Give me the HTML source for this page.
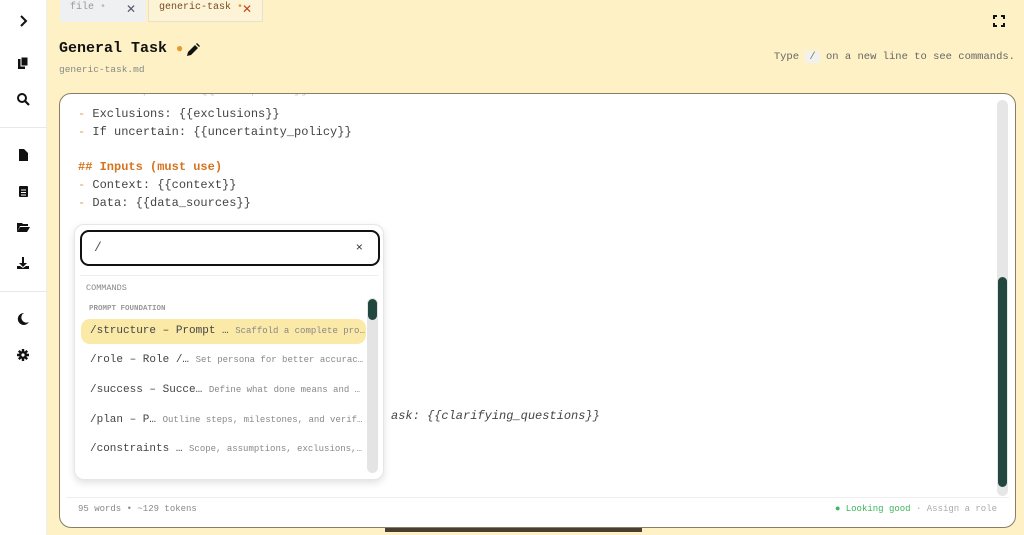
<!DOCTYPE html>
<html><head><style>
*{box-sizing:border-box;margin:0;padding:0}
body{width:1024px;height:535px;overflow:hidden;background:#fdf1c5;font-family:"Liberation Mono",monospace;position:relative}
.side{position:absolute;left:0;top:0;width:47px;height:535px;background:#fff;border-right:1px solid #eee}
.side .ic{position:absolute;left:16px;width:14px;height:14px}
.sep{position:absolute;left:0;width:47px;height:1px;background:#e8e8e8}
.tab{position:absolute;top:0;height:22px;font-size:10px;line-height:16px;padding:0 10px}
.ed{position:absolute;left:59px;top:93px;width:957px;height:435px;background:#fff;border:1px solid #8a7d66;border-radius:12px;overflow:hidden}
.code{position:absolute;left:18px;top:12px;font-size:12px;line-height:17.8px;color:#444;white-space:pre}
.d{color:#e09a5e}
.h{color:#d7731e;font-weight:bold}
.pop{position:absolute;left:74px;top:224px;width:310px;height:256px;background:#fff;border:1px solid #e6e6e6;border-radius:10px;box-shadow:0 3px 8px rgba(0,0,0,.12)}
.inp{position:absolute;left:5px;top:5px;width:300px;height:36px;border:2px solid #111;border-radius:9px;font-size:13px;color:#555;padding:8px 12px}
.item{position:absolute;left:6px;width:285px;height:25px;font-size:11px;line-height:25px;padding-left:9px;color:#444;white-space:nowrap;overflow:hidden;border-radius:9px}
.item span{font-size:9px;color:#888}
</style></head><body>
<div class="side">
<svg class="ic" style="top:14px" viewBox="0 0 14 14"><path d="M5 2l5 5-5 5" stroke="#111" stroke-width="2" fill="none"/></svg>
<svg class="ic" style="top:56px" viewBox="0 0 14 14"><rect x="2" y="3" width="7" height="10" fill="#111"/><rect x="5" y="1" width="7" height="9" fill="#111" stroke="#fff" stroke-width="1"/></svg>
<svg class="ic" style="top:92px" viewBox="0 0 14 14"><circle cx="6" cy="6" r="4" stroke="#111" stroke-width="2" fill="none"/><path d="M9 9l4 4" stroke="#111" stroke-width="2.2"/></svg>
<div class="sep" style="top:127px"></div>
<svg class="ic" style="top:148px" viewBox="0 0 14 14"><path d="M3 1h5l4 4v8H3z" fill="#111"/></svg>
<svg class="ic" style="top:184px" viewBox="0 0 14 14"><rect x="3" y="2" width="9" height="11" rx="1" fill="#111"/><path d="M5 6h5M5 8.5h5M5 11h5" stroke="#fff"/></svg>
<svg class="ic" style="top:220px" viewBox="0 0 14 14"><path d="M1 3h5l1 1h5v2H4l-3 6z" fill="#111"/><path d="M4 7h10l-3 5H1z" fill="#111"/></svg>
<svg class="ic" style="top:256px" viewBox="0 0 14 14"><path d="M6 1h2v6h3l-4 4-4-4h3z M1 10h3l3 2 3-2h3v3H1z" fill="#111"/></svg>
<div class="sep" style="top:291px"></div>
<svg class="ic" style="top:312px" viewBox="0 0 14 14"><path d="M8 1a6 6 0 1 0 5 9A5 5 0 0 1 8 1z" fill="#111"/></svg>
<svg class="ic" style="top:348px" viewBox="0 0 14 14"><g stroke="#111" stroke-width="2.4"><path d="M7 1v12M1 7h12M2.8 2.8l8.4 8.4M11.2 2.8l-8.4 8.4"/></g><circle cx="7" cy="7" r="4" fill="#111"/><circle cx="7" cy="7" r="1.6" fill="#fff"/></svg>
</div>
<div class="tab" style="left:60px;width:86px;background:#eef0f1;color:#999">file <span style="color:#bbb">•</span><span style="position:absolute;right:10px;top:1px;color:#556;font-weight:bold;font-size:12px;font-family:'DejaVu Sans'">✕</span></div>
<div class="tab" style="left:148px;width:115px;background:#fdf4d8;color:#7a4a20;border:1px solid #e8e0c8;border-top:none">generic-task <span style="color:#e79a2a">•</span><span style="position:absolute;right:10px;top:1px;color:#c0431a;font-weight:bold;font-size:12px;font-family:'DejaVu Sans'">✕</span></div>
<svg style="position:absolute;left:993px;top:15px" width="12" height="12" viewBox="0 0 12 12"><path d="M1 4V1h3M8 1h3v3M11 8v3H8M4 11H1V8" stroke="#111" stroke-width="2" fill="none"/></svg>
<div style="position:absolute;left:59px;top:40px;font-size:15px;font-weight:bold;color:#111">General Task <span style="color:#e79a2a;font-size:12px">●</span></div>
<svg style="position:absolute;left:186px;top:43px" width="14" height="14" viewBox="0 0 14 14"><path d="M1 13l1-4 7-7 3 3-7 7z M10 1l1-1 3 3-1 1z" fill="#111"/></svg>
<div style="position:absolute;left:59px;top:64px;font-size:9.5px;color:#888">generic-task.md</div>
<div style="position:absolute;right:9px;top:51px;font-size:10.5px;color:#666">Type <span style="background:#f1f1ee;padding:0 4px;color:#777">/</span> on a new line to see commands.</div>
<div class="ed">
<div style="position:absolute;left:18px;top:-11px;font-size:12px;color:#ccc;white-space:pre">  - Assumptions: {{assumptions}}</div>
<div class="code"><span class="d">-</span> Exclusions: {{exclusions}}
<span class="d">-</span> If uncertain: {{uncertainty_policy}}

<span class="h">## Inputs (must use)</span>
<span class="d">-</span> Context: {{context}}
<span class="d">-</span> Data: {{data_sources}}</div>
<div style="position:absolute;left:331px;top:315px;font-size:12px;color:#444;font-style:italic">ask: {{clarifying_questions}}</div>
<div style="position:absolute;right:7px;top:6px;width:11px;height:396px;background:#e6e6e6;border-radius:6px"><div style="position:absolute;left:1px;top:177px;width:9px;height:210px;background:#22473f;border-radius:5px"></div></div>
<div style="position:absolute;left:6px;right:6px;top:403px;height:1px;background:#eee"></div>
<div style="position:absolute;left:18px;top:410px;font-size:9px;color:#888">95 words • ~129 tokens</div>
<div style="position:absolute;right:18px;top:410px;font-size:9px;color:#aaa"><span style="color:#3bb65a">● Looking good</span> · Assign a role</div>
</div>
<div style="position:absolute;left:385px;top:528px;width:257px;height:4px;background:#4a3f2f"></div>
<div class="pop">
<div class="inp">/<span style="position:absolute;right:15px;top:9px;font-size:12px;color:#333">×</span></div>
<div style="position:absolute;left:5px;right:5px;top:50px;height:1px;background:#eee"></div>
<div style="position:absolute;left:11px;top:58px;font-size:8.5px;color:#888">COMMANDS</div>
<div style="position:absolute;left:14px;top:80px;font-size:7.5px;color:#999;font-weight:bold">PROMPT FOUNDATION</div>
<div style="position:absolute;left:292px;top:73px;width:11px;height:175px;background:#e4e4e4;border-radius:6px"><div style="position:absolute;left:1px;top:1px;width:9px;height:21px;background:#22473f;border-radius:5px"></div></div>
<div class="item" style="top:94px;background:#fbe9a8">/structure – Prompt … <span>Scaffold a complete pro…</span></div>
<div class="item" style="top:123px">/role – Role /… <span>Set persona for better accurac…</span></div>
<div class="item" style="top:153px">/success – Succe…  <span>Define what done means and …</span></div>
<div class="item" style="top:183px">/plan – P… <span>Outline steps, milestones, and verif…</span></div>
<div class="item" style="top:212px">/constraints …  <span>Scope, assumptions, exclusions,…</span></div>
</div>
</body></html>
